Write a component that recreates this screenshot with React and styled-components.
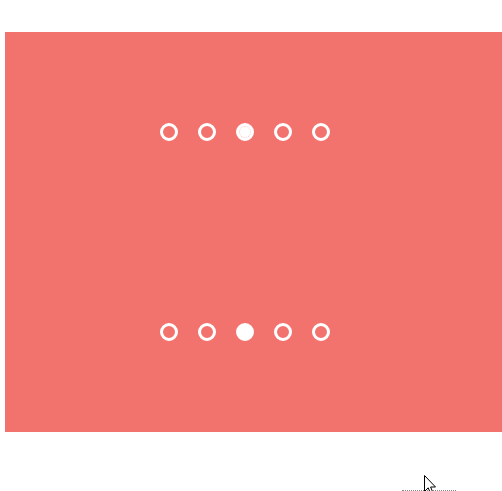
import React from 'react'
import styled, { createGlobalStyle } from 'styled-components'

const Global = createGlobalStyle`
  html, body { margin: 0; padding: 0; background: #fff; overflow: hidden; }
  body { font-family: "Liberation Sans", Arial, sans-serif; }
`

const Page = styled.div`
  position: relative;
  width: 502px;
  height: 491px;
  padding: 32px 0 0 5px;
  box-sizing: border-box;
  overflow: hidden;
`

const Panel = styled.div`
  width: 500px;
  height: 400px;
  background: #f2736e;
  display: flex;
  flex-direction: column;
`

const Slide = styled.div`
  height: 200px;
  width: 480px;
  display: flex;
  align-items: center;
  justify-content: center;
  gap: 20px;
`

const Dot = styled.span`
  width: 18px;
  height: 18px;
  box-sizing: border-box;
  border-radius: 50%;
  border: 3px solid #fff;
  background: ${p => (p.$active ? '#fff' : 'transparent')};
  position: relative;
  &::after {
    content: '';
    display: ${p => (p.$focus ? 'block' : 'none')};
    position: absolute;
    inset: 0;
    border-radius: 50%;
    border: 1px dotted #f8c8c6;
  }
`

const Footer = styled.div`
  position: relative;
  height: 59px;
`

const Dotted = styled.div`
  position: absolute;
  left: 397px;
  top: 58px;
  width: 54px;
  border-top: 1px dotted #888;
`

const Cursor = styled.svg`
  position: absolute;
  left: 419px;
  top: 43px;
`

function Dots({ focus }) {
  return (
    <Slide>
      {[0, 1, 2, 3, 4].map(i => (
        <Dot key={i} $active={i === 2} $focus={focus && i === 2} />
      ))}
    </Slide>
  )
}

export default function App() {
  return (
    <Page>
      <Global />
      <Panel>
        <Dots focus />
        <Dots />
      </Panel>
      <Footer>
        <Dotted />
        <Cursor width="14" height="22" viewBox="0 0 14 22">
          <path d="M0.5 0.5 L0.5 16.5 L4.2 12.8 L7 19.5 L9.3 18.5 L6.6 12 L11.5 12 Z" fill="#fff" stroke="#000" strokeWidth="1" />
        </Cursor>
      </Footer>
    </Page>
  )
}
